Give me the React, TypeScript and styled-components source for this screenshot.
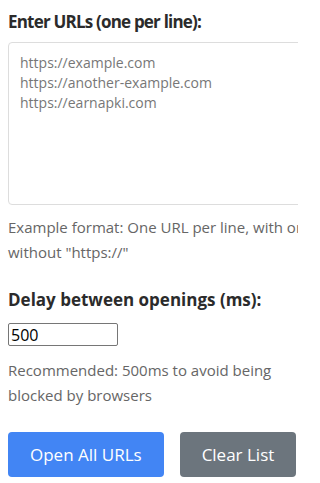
import React from "react";
import styled, { createGlobalStyle } from "styled-components";

const Global = createGlobalStyle`
  html, body { margin: 0; padding: 0; background: #ffffff; }
  body { font-family: "Open Sans", "Noto Sans", Arial, sans-serif; color: #333333; }
`;

const Viewport = styled.div`
  width: 298px;
  height: 483px;
  overflow: hidden;
`;

const Page = styled.div`
  width: 310px;
  padding: 8px;
`;

const Field = styled.div`
  display: flex;
  flex-direction: column;
  align-items: flex-start;
`;

const Label = styled.label<{ $top: number; $bottom: number; $tracking?: number }>`
  display: block;
  font-size: 17px;
  font-weight: 700;
  line-height: 24px;
  color: #2b2b2b;
  letter-spacing: ${(p) => p.$tracking ?? 0}px;
  margin: ${(p) => p.$top}px 0 ${(p) => p.$bottom}px;
`;

const UrlArea = styled.textarea`
  box-sizing: border-box;
  width: 100%;
  height: 163px;
  padding: 10px 11px;
  border: 1px solid #dddddd;
  border-radius: 4px;
  font-family: inherit;
  font-size: 14px;
  line-height: 20px;
  resize: none;
  color: #333;
  &::placeholder { color: #777777; }
`;

const Help = styled.p<{ $top: number }>`
  margin: ${(p) => p.$top}px 0 0;
  font-size: 15px;
  line-height: 25px;
  color: #666666;
`;

const DelayInput = styled.input`
  box-sizing: border-box;
  width: 110px;
  height: 23px;
  padding: 1px 2px;
  border: 1px solid #767676;
  border-radius: 2px;
  font-family: inherit;
  font-size: 16px;
  color: #000;
`;

const Actions = styled.div`
  display: flex;
  gap: 16px;
  margin-top: 24px;
`;

const Button = styled.button<{ $variant: "primary" | "secondary" }>`
  height: 45px;
  padding: 0 22px;
  border: none;
  border-radius: 4px;
  font-family: inherit;
  font-size: 17px;
  color: #ffffff;
  background: ${(p) => (p.$variant === "primary" ? "#4285f4" : "#6c757d")};
  cursor: pointer;
`;

export default function App() {
  return (
    <>
      <Global />
      <Viewport>
        <Page>
          <Field>
            <Label htmlFor="urls" $top={2} $bottom={8} $tracking={-0.8}>
              Enter URLs (one per line):
            </Label>
            <UrlArea
              id="urls"
              placeholder={"https://example.com\nhttps://another-example.com\nhttps://earnapki.com"}
            />
            <Help $top={10}>Example format: One URL per line, with or without "https://"</Help>
          </Field>
          <Field>
            <Label htmlFor="delay" $top={23} $bottom={11}>Delay between openings (ms):</Label>
            <DelayInput id="delay" type="text" defaultValue="500" />
            <Help $top={12}>Recommended: 500ms to avoid being blocked by browsers</Help>
          </Field>
          <Actions>
            <Button $variant="primary">Open All URLs</Button>
            <Button $variant="secondary">Clear List</Button>
          </Actions>
        </Page>
      </Viewport>
    </>
  );
}
